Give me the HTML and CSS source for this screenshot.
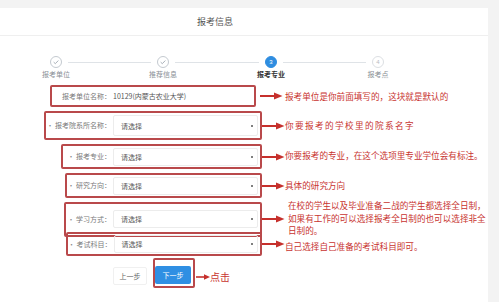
FILE: index.html
```html
<!DOCTYPE html>
<html lang="zh-CN">
<head>
<meta charset="utf-8">
<title>报考信息</title>
<link rel="stylesheet" href="styles.css">
</head>
<body>
<div class="topband"></div>
<div class="panel">
  <div class="header"><span class="title">报考信息</span></div>

  <div class="steps">
    <div class="step done">
      <div class="dot"><svg viewBox="0 0 12 12" width="8" height="8"><path d="M2.5 6.2 L5 8.5 L9.5 3.8" fill="none" stroke="#9aa3ad" stroke-width="1.3"/></svg></div>
      <div class="slabel">报考单位</div>
    </div>
    <div class="line"></div>
    <div class="step done">
      <div class="dot"><svg viewBox="0 0 12 12" width="8" height="8"><path d="M2.5 6.2 L5 8.5 L9.5 3.8" fill="none" stroke="#9aa3ad" stroke-width="1.3"/></svg></div>
      <div class="slabel">推荐信息</div>
    </div>
    <div class="line line--b"></div>
    <div class="step active">
      <div class="dot">3</div>
      <div class="slabel">报考专业</div>
    </div>
    <div class="line"></div>
    <div class="step todo">
      <div class="dot">4</div>
      <div class="slabel">报考点</div>
    </div>
  </div>

  <div class="form">
    <div class="row row--1">
      <div class="box box--1"><span class="lbl">报考单位名称：</span><span class="val">10129(内蒙古农业大学)</span></div>
      <svg class="arrow arrow--1" viewBox="0 0 23 8" width="23" height="8"><path d="M0 4 H16" stroke="#c6302c" stroke-width="2"/><path d="M14 0.5 L22.5 4 L14 7.5 Z" fill="#c6302c"/></svg>
      <p class="note">报考单位是你前面填写的，这块就是默认的</p>
    </div>
    <div class="row row--2">
      <div class="box box--2"><span class="lbl"><span class="req">•</span> 报考院系所名称：</span><span class="sel">请选择<i class="caret"></i></span></div>
      <svg class="arrow" viewBox="0 0 23 8" width="23" height="8"><path d="M0 4 H16" stroke="#c6302c" stroke-width="2"/><path d="M14 0.5 L22.5 4 L14 7.5 Z" fill="#c6302c"/></svg>
      <p class="note note--wide">你要报考的学校里的院系名字</p>
    </div>
    <div class="row row--3">
      <div class="box box--3"><span class="lbl"><span class="req">•</span> 报考专业：</span><span class="sel">请选择<i class="caret"></i></span></div>
      <svg class="arrow" viewBox="0 0 23 8" width="23" height="8"><path d="M0 4 H16" stroke="#c6302c" stroke-width="2"/><path d="M14 0.5 L22.5 4 L14 7.5 Z" fill="#c6302c"/></svg>
      <p class="note note--up">你要报考的专业，在这个选项里专业学位会有标注。</p>
    </div>
    <div class="row row--4">
      <div class="box box--4"><span class="lbl"><span class="req">•</span> 研究方向：</span><span class="sel">请选择<i class="caret"></i></span></div>
      <svg class="arrow" viewBox="0 0 23 8" width="23" height="8"><path d="M0 4 H16" stroke="#c6302c" stroke-width="2"/><path d="M14 0.5 L22.5 4 L14 7.5 Z" fill="#c6302c"/></svg>
      <p class="note">具体的研究方向</p>
    </div>
    <div class="row row--5">
      <div class="box box--5"><span class="lbl"><span class="req">•</span> 学习方式：</span><span class="sel">请选择<i class="caret"></i></span></div>
      <svg class="arrow" viewBox="0 0 23 8" width="23" height="8"><path d="M0 4 H16" stroke="#c6302c" stroke-width="2"/><path d="M14 0.5 L22.5 4 L14 7.5 Z" fill="#c6302c"/></svg>
      <p class="note note--multi">在校的学生以及毕业准备二战的学生都选择全日制，<br>如果有工作的可以选择报考全日制的也可以选择非全<br>日制的。</p>
    </div>
    <div class="row row--6">
      <div class="box box--6"><span class="lbl"><span class="req">•</span> 考试科目：</span><span class="sel">请选择<i class="caret"></i></span></div>
      <svg class="arrow" viewBox="0 0 23 8" width="23" height="8"><path d="M0 4 H16" stroke="#c6302c" stroke-width="2"/><path d="M14 0.5 L22.5 4 L14 7.5 Z" fill="#c6302c"/></svg>
      <p class="note note--down">自己选择自己准备的考试科目即可。</p>
    </div>
  </div>

  <div class="actions">
    <span class="btn btn--prev">上一步</span>
    <span class="next-wrap"><span class="btn btn--next">下一步</span></span>
    <svg class="arrow-sm" viewBox="0 0 14 6" width="14" height="6"><path d="M0 3 H9" stroke="#c6302c" stroke-width="1.6"/><path d="M8 0.3 L14 3 L8 5.7 Z" fill="#c6302c"/></svg>
    <span class="click">点击</span>
  </div>
</div>
</body>
</html>
```

FILE: styles.css
```css
* { box-sizing: border-box; }

html, body {
  margin: 0;
  padding: 0;
}

body {
  width: 499px;
  height: 302px;
  overflow: hidden;
  background: #f3f3f3;
  font-family: "Noto Sans CJK SC", "Noto Sans", sans-serif;
  color: #555;
}

.topband {
  height: 8px;
  background: #f3f3f3;
}

.panel {
  width: 488px;
  height: 294px;
  background: #fff;
  display: flex;
  flex-direction: column;
}

.header {
  height: 28px;
  border-bottom: 1px solid #efefef;
  display: flex;
  align-items: center;
  padding-left: 197px;
}

.title {
  font-size: 9px;
  color: #555;
  line-height: 1;
}

/* steps */
.steps {
  display: flex;
  align-items: flex-start;
  padding-left: 50px;
  margin-top: 20px;
  height: 22px;
}

.step {
  width: 12px;
  display: flex;
  flex-direction: column;
  align-items: center;
}

.dot {
  width: 12px;
  height: 12px;
  border-radius: 50%;
  border: 1px solid #c4cad0;
  background: #fff;
  display: flex;
  align-items: center;
  justify-content: center;
  font-size: 6px;
  line-height: 1;
  font-family: "Liberation Sans", sans-serif;
}

.step.active .dot {
  background: #2f8de0;
  border-color: #2f8de0;
  color: #fff;
}

.step.todo .dot {
  border-color: #dcdfe3;
  color: #b8bcc2;
}

.slabel {
  margin-top: 2px;
  font-size: 7px;
  line-height: 9px;
  white-space: nowrap;
  color: #8a8f96;
}

.step.active .slabel {
  color: #333;
  font-weight: bold;
}

.line {
  width: 83px;
  height: 1px;
  margin: 6px 6px 0;
  background: #dfe3e7;
}

.line--b { width: 84px; }

/* form */
.form {
  margin-top: 7px;
  display: flex;
  flex-direction: column;
  gap: 4px;
}

.row {
  display: grid;
  grid-template-columns: 262px 23px 1fr;
  align-items: center;
}

.row--1 { height: 22px; }
.row--2 { height: 29px; }
.row--3 { height: 25px; }
.row--4 { height: 25px; }
.row--5 { height: 26px; }
.row--6 { height: 24px; }

.box {
  height: 100%;
  border: 2px solid #b9494b;
  border-radius: 2px;
  display: flex;
  align-items: center;
}

.box--1 { margin-left: 50px; margin-right: 6px; }
.box--2 { margin-left: 44px; }
.box--3 { margin-left: 61px; }
.box--4 { margin-left: 65px; }
.box--5 { margin-left: 64px; }
.box--6 { margin-left: 66px; }

.lbl {
  flex: 1;
  text-align: right;
  font-size: 7px;
  line-height: 1;
  color: #7a7a7a;
  white-space: nowrap;
}

.req { color: #888; }

.val {
  width: 141px;
  margin-left: 2px;
  font-size: 7px;
  color: #555;
  white-space: nowrap;
  line-height: 1;
}

.sel {
  width: 145px;
  height: 18px;
  margin: 0 2px;
  padding-left: 7px;
  border: 1px solid #ececec;
  border-radius: 2px;
  display: flex;
  align-items: center;
  font-size: 7px;
  color: #555;
  position: relative;
}

.row--2 .sel { height: 21px; }

.caret {
  position: absolute;
  right: 4px;
  top: 50%;
  width: 2px;
  height: 2px;
  margin-top: -1px;
  border-radius: 50%;
  background: #555;
}

.arrow {
  display: block;
}

.arrow--1 { margin-left: -2px; }

.note {
  margin: 0;
  font-size: 8.6px;
  line-height: 12.5px;
  color: #c8332f;
  white-space: nowrap;
}

.note--wide { letter-spacing: 1.4px; }
.note--up { margin-top: -3px; }
.note--down { margin-top: 5px; }

.note--multi {
  align-self: start;
  margin-left: 3px;
  margin-top: -3px;
}

/* actions */
.actions {
  margin-top: 2px;
  padding-left: 113px;
  display: flex;
  align-items: center;
}

.btn {
  display: flex;
  align-items: center;
  justify-content: center;
  height: 18px;
  font-size: 7px;
  border-radius: 2px;
}

.btn--prev {
  width: 34px;
  margin-top: 6px;
  border: 1px solid #f0f0f0;
  color: #666;
  background: #fff;
}

.next-wrap {
  margin-left: 6px;
  border: 2px solid #b9494b;
  border-radius: 2px;
  padding: 6px 2px 2px 0;
}

.btn--next {
  width: 36px;
  background: #2f8fe3;
  color: #fff;
}

.arrow-sm {
  display: block;
  margin-left: 1px;
  margin-top: 7px;
}

.click {
  margin-top: 7px;
  font-size: 10px;
  line-height: 1;
  color: #c8332f;
}
```
